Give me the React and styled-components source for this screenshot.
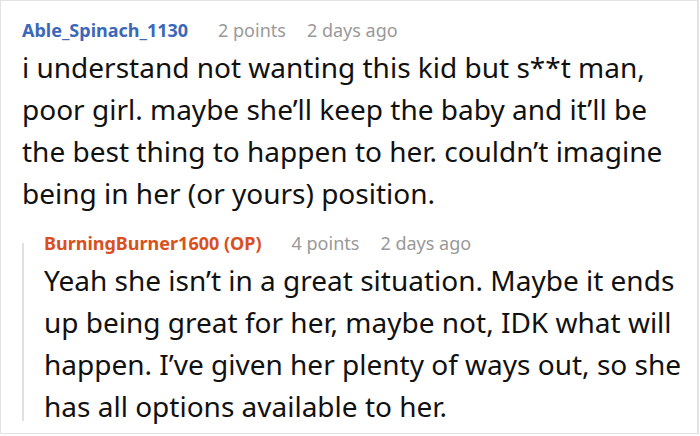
import React from 'react'
import styled, {createGlobalStyle} from 'styled-components'

const GlobalStyle = createGlobalStyle`
  html, body {
    margin: 0;
    padding: 0;
    background: #ffffff;
  }
  body {
    font-family: "Noto Sans", "Open Sans", sans-serif;
  }
`

const comment = {
  author: 'Able_Spinach_1130',
  points: '2 points',
  age: '2 days ago',
  text: [
    'i understand not wanting this kid but s**t man,',
    'poor girl. maybe she\u2019ll keep the baby and it\u2019ll be the best thing to happen to her. couldn\u2019t imagine being in her (or yours) position.',
  ],
  reply: {
    author: 'BurningBurner1600 (OP)',
    points: '4 points',
    age: '2 days ago',
    text: [
      'Yeah she isn\u2019t in a great situation. Maybe it ends up being great for her, maybe not, IDK what will happen. I\u2019ve given her plenty of ways out, so she has all options available to her.',
    ],
  },
}

const Comment = ({data, op}) => (
  <>
    <Header>
      <Author $op={op}>{data.author}</Author>
      <Meta>{data.points}</Meta>
      <Meta>{data.age}</Meta>
    </Header>
    <Body>
      {data.text.map((t, i) => (
        <React.Fragment key={i}>
          {i > 0 && <br />}
          {t}
        </React.Fragment>
      ))}
    </Body>
  </>
)

const App = () => (
  <>
    <GlobalStyle />
    <Thread>
      <Comment data={comment} />
      <Reply>
        <ThreadLine />
        <div>
          <Comment data={comment.reply} op />
        </div>
      </Reply>
    </Thread>
  </>
)

export default App

const Thread = styled.div`
  width: 699px;
  height: 434px;
  box-sizing: border-box;
  border: 1px solid #e2e2e2;
  border-right-width: 2px;
  padding: 17px 0 0 21px;
  overflow: hidden;
`

const Header = styled.div`
  display: flex;
  align-items: baseline;
  gap: 21px;
  font-size: 18px;
  line-height: 24px;
`

const Author = styled.span`
  font-weight: 700;
  color: ${p => (p.$op ? '#d9501e' : '#3b68b8')};
  margin-right: 9px;
`

const Meta = styled.span`
  color: #999999;
`

const Body = styled.p`
  margin: 4px 0 0;
  font-size: 28px;
  line-height: 42px;
  color: #111111;
  max-width: 645px;
`

const Reply = styled.div`
  display: grid;
  grid-template-columns: 2px 1fr;
  column-gap: 20px;
  margin-top: 17px;
`

const ThreadLine = styled.div`
  background: #e0e0e0;
  margin: 12px 0 6px;
`
